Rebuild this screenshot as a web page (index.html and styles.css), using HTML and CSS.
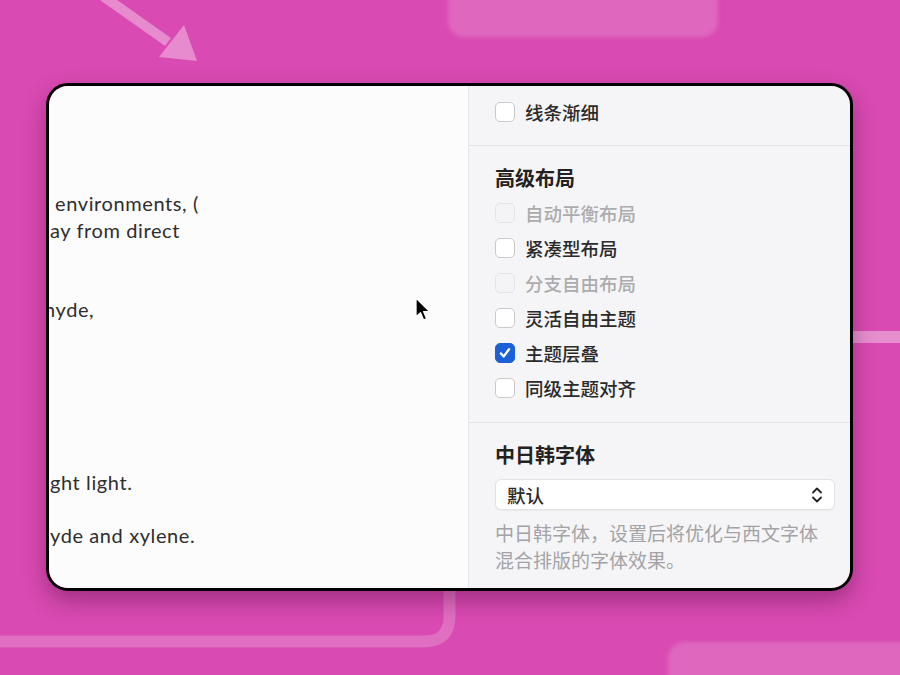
FILE: index.html
```html
<!DOCTYPE html>
<html lang="zh-CN">
<head>
  <meta charset="UTF-8">
  <meta name="viewport" content="width=device-width, initial-scale=1.0">
  <title>高级布局设置</title>
  <link rel="stylesheet" href="styles.css">
</head>
<body>
  <svg class="deco" width="900" height="675" viewBox="0 0 900 675">
    <defs>
      <filter id="soft"><feGaussianBlur stdDeviation="2"/></filter>
    </defs>
    <rect x="448" y="-20" width="270" height="57" rx="16" fill="rgba(255,255,255,0.16)" filter="url(#soft)"/>
    <rect x="668" y="642" width="260" height="60" rx="16" fill="rgba(255,255,255,0.16)" filter="url(#soft)"/>
    <path d="M100 -6 L168 42" stroke="rgba(255,255,255,0.36)" stroke-width="10" fill="none"/>
    <path d="M197 61 L159 57 L184 25 Z" fill="rgba(255,255,255,0.36)"/>
    <path d="M449.5 560 L449.5 616 Q449.5 641.5 424 641.5 L-10 641.5" stroke="rgba(255,255,255,0.2)" stroke-width="12" fill="none"/>
    <path d="M840 337 L910 337" stroke="rgba(255,255,255,0.38)" stroke-width="12" fill="none"/>
  </svg>

  <div class="card">
    <div class="doc">
      <p class="line l1">environments, (</p>
      <p class="line l2">ay from direct</p>
      <p class="line l3">hyde,</p>
      <p class="line l4">ght light.</p>
      <p class="line l5">yde and xylene.</p>
      <svg class="cursor" width="18" height="26" viewBox="0 0 18 26">
        <path d="M2 1 L2 20 L6.5 15.8 L9.6 23 L12.6 21.7 L9.6 14.6 L15.6 14.6 Z" fill="#000" stroke="#fff" stroke-width="1.3" stroke-linejoin="round"/>
      </svg>
    </div>

    <div class="panel">
      <div class="section first">
        <label class="row"><span class="box"></span>线条渐细</label>
      </div>

      <div class="section">
        <h3>高级布局</h3>
        <label class="row off"><span class="box"></span>自动平衡布局</label>
        <label class="row"><span class="box"></span>紧凑型布局</label>
        <label class="row off"><span class="box"></span>分支自由布局</label>
        <label class="row"><span class="box"></span>灵活自由主题</label>
        <label class="row"><span class="box on">
          <svg width="20" height="20" viewBox="0 0 20 20"><path d="M5.5 10.5 L8.6 13.8 L14.5 5.8" stroke="#fff" stroke-width="2.6" fill="none" stroke-linecap="round" stroke-linejoin="round"/></svg>
        </span>主题层叠</label>
        <label class="row"><span class="box"></span>同级主题对齐</label>
      </div>

      <div class="section">
        <h3>中日韩字体</h3>
        <div class="select">
          <span>默认</span>
          <svg width="12" height="20" viewBox="0 0 12 20"><path d="M2 7.5 L6 3.5 L10 7.5 M2 12.5 L6 16.5 L10 12.5" stroke="#222" stroke-width="1.8" fill="none" stroke-linecap="round" stroke-linejoin="round"/></svg>
        </div>
        <p class="hint">中日韩字体，设置后将优化与西文字体混合排版的字体效果。</p>
      </div>
    </div>
  </div>
</body>
</html>
```

FILE: styles.css
```css
:root {
  --pink: #d94ab2;
  --ink: #2a2a2a;
  --muted: #a3a3a6;
}

* {
  box-sizing: border-box;
}

body {
  margin: 0;
  width: 900px;
  height: 675px;
  overflow: hidden;
  background: var(--pink);
  font-family: "Noto Sans CJK SC", "Noto Sans", sans-serif;
  position: relative;
}

.deco {
  position: absolute;
  left: 0;
  top: 0;
}

.card {
  position: relative;
  margin: 83px 0 0 46px;
  width: 807px;
  height: 508px;
  border: 3px solid #000;
  border-radius: 22px;
  overflow: hidden;
  display: flex;
  box-shadow: 0 10px 22px rgba(60, 0, 40, 0.35);
}

.doc {
  position: relative;
  width: 420px;
  background: #fcfcfc;
  border-right: 1px solid #e6e6e8;
  font-family: Lato, "Liberation Sans", sans-serif;
  font-size: 20px;
  letter-spacing: 0.6px;
  color: #2e2e2e;
  padding-top: 104px;
  overflow: hidden;
}

.line {
  margin: 0;
  padding-left: 6px;
  height: 27px;
  line-height: 27px;
  white-space: nowrap;
}

.l2, .l4, .l5 {
  padding-left: 1px;
}

.l3 {
  margin-top: 52px;
  padding-left: 0;
  text-indent: -5px;
}

.l4 {
  margin-top: 146px;
}

.l5 {
  margin-top: 26px;
}

.cursor {
  position: absolute;
  left: 365px;
  top: 211px;
}

.panel {
  flex: 1;
  background: #f5f5f7;
  color: var(--ink);
}

.section {
  padding: 20px 0 17px 26px;
  border-top: 1px solid #e3e3e6;
}

.section.first {
  border-top: 0;
  padding: 8px 0 16px 26px;
}

h3 {
  margin: 0 0 5px;
  font-size: 20px;
  font-weight: 700;
  line-height: 24px;
  color: #222;
}

.row {
  display: flex;
  align-items: center;
  height: 35px;
  font-size: 18.5px;
  font-weight: 500;
}

.box {
  width: 20px;
  height: 20px;
  border: 1px solid #c9c9cc;
  border-radius: 5px;
  background: #fff;
  margin-right: 10px;
  display: flex;
  align-items: center;
  justify-content: center;
}

.box.on {
  background: #1b5fd9;
  border-color: #1b5fd9;
}

.row.off {
  color: #acacae;
}

.row.off .box {
  border-color: #e4e4e6;
  background: #f4f4f6;
}

.select {
  margin: 12px 15px 0 0;
  height: 31px;
  background: #fff;
  border: 1px solid #e2e2e4;
  border-radius: 6px;
  display: flex;
  align-items: center;
  justify-content: space-between;
  padding: 0 11px 0 11px;
  font-size: 18.5px;
  font-weight: 500;
  box-shadow: 0 1px 1px rgba(0, 0, 0, 0.04);
}

.hint {
  margin: 9px 15px 0 0;
  font-size: 19px;
  line-height: 27px;
  color: var(--muted);
}
```
